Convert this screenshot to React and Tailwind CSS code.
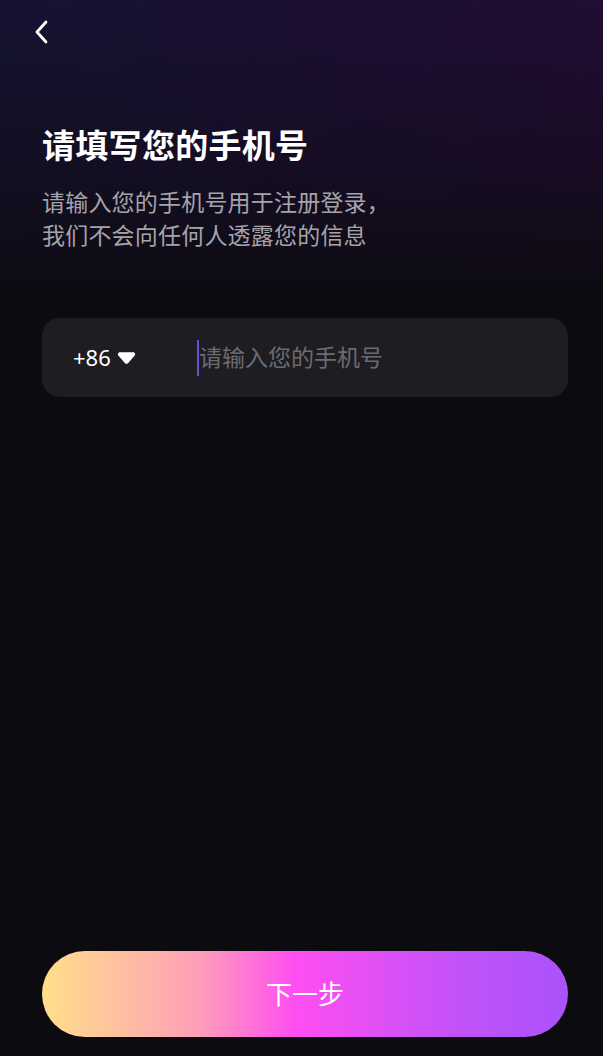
export default function App() {
  return (
    <div
      className="min-h-[1056px] flex flex-col bg-[#0c0b10] bg-[linear-gradient(to_bottom,rgba(12,11,16,0)_0px,rgba(12,11,16,0.45)_170px,#0c0b10_305px),linear-gradient(100deg,#151331_0%,#1d0e33_45%,#250b33_100%)] bg-no-repeat"
      style={{ fontFamily: '"Noto Sans", "Noto Sans CJK SC", sans-serif' }}
    >
      {/* Header */}
      <div className="h-[64px] flex items-center pl-[34px]">
        <button className="w-[16px] h-[24px] flex items-center">
          <svg width="15" height="24" viewBox="0 0 15 24" fill="none">
            <polyline
              points="12,2 3,12 12,22"
              stroke="#ffffff"
              strokeWidth="2.8"
              strokeLinecap="round"
              strokeLinejoin="round"
            />
          </svg>
        </button>
      </div>

      <div className="pl-[42px] pr-[35px] flex flex-col flex-1">
        <h1 className="mt-[59px] text-[33px] leading-[46px] font-bold text-white tracking-[0.3px]">
          请填写您的手机号
        </h1>
        <p className="mt-[17px] text-[23px] leading-[33px] text-[#a6a3ab] tracking-[0.2px]">
          请输入您的手机号用于注册登录，
          <br />
          我们不会向任何人透露您的信息
        </p>

        {/* Phone input */}
        <div className="mt-[66px] h-[79px] rounded-[18px] bg-[#1e1d22] flex items-center pl-[31px] pr-[24px]">
          <div className="flex items-center w-[124px] shrink-0 gap-[6px]">
            <span className="text-[22px] text-white">+86</span>
            <svg width="19" height="14" viewBox="0 0 18 13">
              <path
                d="M3 1 H15 C17 1 17.8 3 16.6 4.4 L10.4 11.4 C9.6 12.2 8.4 12.2 7.6 11.4 L1.4 4.4 C0.2 3 1 1 3 1 Z"
                fill="#ffffff"
              />
            </svg>
          </div>
          <div className="flex items-center flex-1">
            <span className="w-[2px] h-[36px] bg-[#6a4fd2]" />
            <span className="text-[23px] text-[#6c6b71]">请输入您的手机号</span>
          </div>
        </div>

        <div className="flex-1" />

        {/* Next button */}
        <button className="mb-[19px] h-[86px] w-full rounded-full bg-[linear-gradient(90deg,#ffe08a_0%,#ff9eb8_30%,#ff4ef2_48%,#c752f8_76%,#a952fb_100%)] flex items-center justify-center">
          <span className="text-[26px] text-white">下一步</span>
        </button>
      </div>
    </div>
  );
}
